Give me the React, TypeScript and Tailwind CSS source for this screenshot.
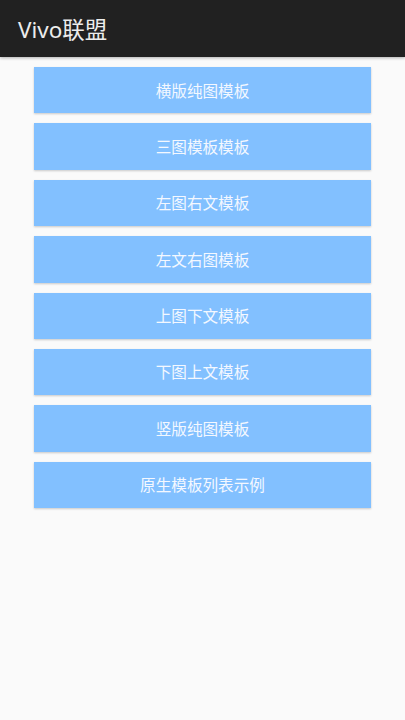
import React from "react";

const items = [
  "横版纯图模板",
  "三图模板模板",
  "左图右文模板",
  "左文右图模板",
  "上图下文模板",
  "下图上文模板",
  "竖版纯图模板",
  "原生模板列表示例",
];

export default function App() {
  return (
    <div
      className="w-[405px] h-[720px] bg-[#fafafa] flex flex-col"
      style={{ fontFamily: '"Noto Sans", "Noto Sans CJK SC", sans-serif' }}
    >
      <div className="h-[57px] bg-[#212121] flex items-center pl-[18px] pt-[3px] shadow-[0_1px_3px_rgba(0,0,0,0.3)] relative z-10">
        <span className="text-[22.5px] text-[#ececec]">Vivo联盟</span>
      </div>
      <div className="flex flex-col gap-[10px] pt-[10px] px-[34px]">
        {items.map((t) => (
          <div
            key={t}
            className="h-[46.4px] bg-[#82c0ff] flex items-center justify-center pt-[2px] text-[15.6px] text-[#f4f8ff] shadow-[0_1px_2px_rgba(0,0,0,0.2)]"
          >
            {t}
          </div>
        ))}
      </div>
    </div>
  );
}
